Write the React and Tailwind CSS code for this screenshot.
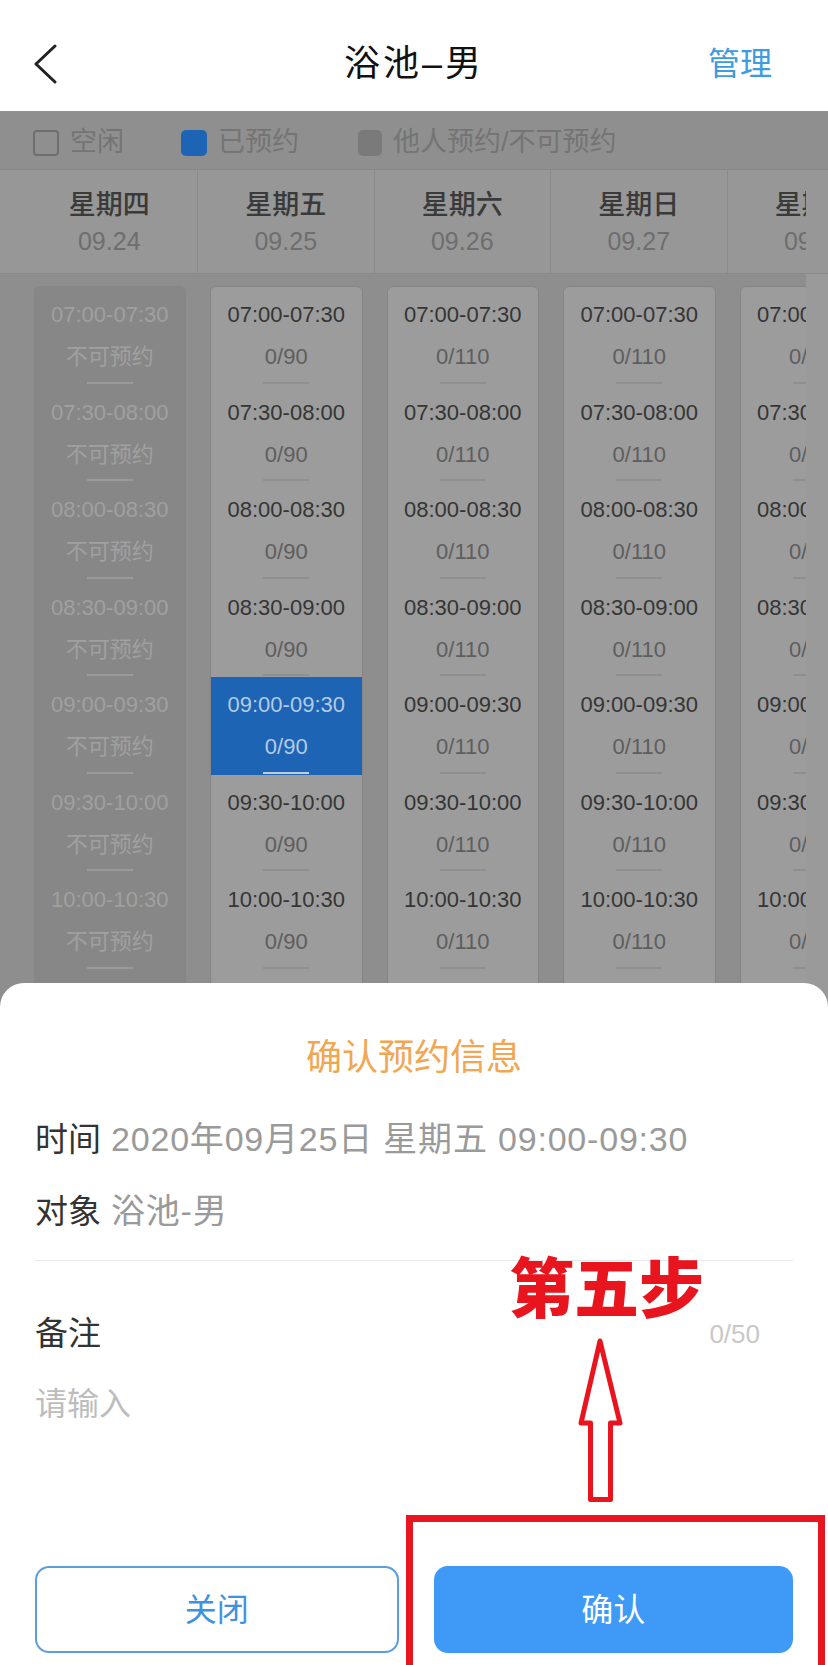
import React from 'react';

const font = { fontFamily: '"Liberation Sans", "Noto Sans CJK SC", sans-serif' };

const days = [
  { week: '星期四', date: '09.24', cap: null },
  { week: '星期五', date: '09.25', cap: '0/90' },
  { week: '星期六', date: '09.26', cap: '0/110' },
  { week: '星期日', date: '09.27', cap: '0/110' },
  { week: '星期一', date: '09.28', cap: '0/110' },
];

const times = [
  '07:00-07:30', '07:30-08:00', '08:00-08:30', '08:30-09:00',
  '09:00-09:30', '09:30-10:00', '10:00-10:30', '10:30-11:00',
];

function Slot({ time, cap, disabled, picked }) {
  let box = 'bg-transparent';
  let t1 = 'text-[#353535]';
  let t2 = 'text-[#5e5e5e]';
  let line = 'bg-[#8f8f8f]';
  if (disabled) { t1 = 'text-[#a0a0a0]'; t2 = 'text-[#a0a0a0]'; line = 'bg-[#9a9a9a]'; }
  if (picked) { box = 'bg-[#1d64b5]'; t1 = 'text-[#b4cbe4]'; t2 = 'text-[#b4cbe4]'; line = 'bg-[#c2ccd6]'; }
  return (
    <div className={`h-[97.5px] flex flex-col items-center pt-[14px] ${box}`}>
      <div className={`text-[22px] leading-[28px] ${t1}`}>{time}</div>
      <div className={`mt-[14px] text-[22px] leading-[28px] ${t2}`}>{disabled ? '不可预约' : cap}</div>
      <div className={`mt-auto mb-[1px] w-[46px] h-[2px] ${line}`} />
    </div>
  );
}

export default function App() {
  return (
    <div className="relative w-[828px] h-[1665px] overflow-hidden bg-[#8e8e8e]" style={font}>
      {/* nav */}
      <div className="h-[111px] bg-white grid grid-cols-[1fr_auto_1fr] items-center pl-[34px] pr-[56px] pt-[16px]">
        <svg width="24" height="40" viewBox="0 0 24 40">
          <polyline points="21,2 2,20 21,38" fill="none" stroke="#222" strokeWidth="3" strokeLinecap="round" strokeLinejoin="round" />
        </svg>
        <div className="text-[36px] leading-[44px] tracking-[3px] text-[#111] ml-[22px]">浴池–男</div>
        <div className="text-[32px] leading-[44px] text-[#3d9be0] justify-self-end">管理</div>
      </div>

      {/* legend */}
      <div className="h-[59px] bg-[#8f8f8f] border-b border-[#878787] flex items-center pl-[33px] pt-[5px] text-[27px] text-[#747474]">
        <span className="w-[26px] h-[26px] rounded-[4px] border-2 border-[#6e6e6e]" />
        <span className="ml-[11px]">空闲</span>
        <span className="ml-[57px] w-[26px] h-[26px] rounded-[5px] bg-[#1d64b5]" />
        <span className="ml-[11px]">已预约</span>
        <span className="ml-[59px] w-[24px] h-[26px] rounded-[5px] bg-[#7a7a7a]" />
        <span className="ml-[11px]">他人预约/不可预约</span>
      </div>

      {/* date row */}
      <div className="flex bg-[#979797] border-b border-[#8a8a8a]">
        <div className="w-[806px] h-[103px] flex overflow-hidden pl-[21.5px]">
          {days.map((d, i) => (
            <div key={i} className="w-[176.5px] shrink-0 flex flex-col items-center pt-[18px] border-r border-[#8a8a8a]">
              <div className="text-[27px] leading-[34px] font-medium text-[#3a3a3a]">{d.week}</div>
              <div className="mt-[4px] text-[25px] leading-[30px] text-[#6e6e6e]">{d.date}</div>
            </div>
          ))}
        </div>
        <div className="w-[22px]" />
      </div>

      {/* slots */}
      <div className="flex">
        <div className="w-[806px] overflow-hidden flex pl-[21.5px] pt-[12px]">
          {days.map((d, i) => (
            <div key={i} className="w-[176.5px] shrink-0 px-[12px]">
              <div className={`rounded-t-[6px] border border-[#858585] ${i === 0 ? 'bg-[#878787]' : 'bg-[#9c9c9c]'}`}>
                {times.map((t, j) => (
                  <Slot key={j} time={t} cap={d.cap} disabled={i === 0} picked={i === 1 && j === 4} />
                ))}
              </div>
            </div>
          ))}
        </div>
        <div className="w-[22px] bg-[#9a9a9a]" />
      </div>

      {/* confirm sheet */}
      <div className="absolute left-0 right-0 bottom-0 h-[682px] bg-white rounded-t-[24px] flex flex-col px-[35px] pb-[12px]">
        <div className="mt-[51px] h-[40px] leading-[40px] text-center text-[36px] text-[#f0a652]" style={{ fontFamily: '"Noto Sans CJK SC", sans-serif' }}>确认预约信息</div>
        <div className="mt-[45px] h-[40px] leading-[40px] whitespace-nowrap">
          <span className="text-[33px] text-[#333]">时间</span>
          <span className="ml-[10px] text-[34px] tracking-[0.8px] text-[#9a9a9a]">2020年09月25日 星期五 09:00-09:30</span>
        </div>
        <div className="mt-[32px] h-[40px] leading-[40px]">
          <span className="text-[33px] text-[#333]">对象</span>
          <span className="ml-[10px] text-[34px] tracking-[0.8px] text-[#9a9a9a]">浴池-男</span>
        </div>
        <div className="mt-[29px] h-px bg-[#e8e8e8]" />
        <div className="mt-[53px] h-[40px] flex items-center justify-between pr-[33px]">
          <span className="text-[33px] text-[#333]">备注</span>
          <span className="text-[26px] text-[#c8c8c8]">0/50</span>
        </div>
        <div className="mt-[30px] h-[40px] leading-[40px] text-[32px] text-[#bdbdbd]">请输入</div>
        <div className="mt-auto flex gap-[35px]">
          <button className="flex-1 h-[87px] rounded-[14px] border-2 border-[#5a9ee0] text-[32px] text-[#3f92e0]">关闭</button>
          <button className="flex-1 h-[87px] rounded-[14px] bg-[#3e9af6] text-[32px] text-white">确认</button>
        </div>
      </div>

      {/* red annotation */}
      <div className="absolute left-[509px] top-[1252px] text-[65px] leading-none font-black text-[#e8141e] whitespace-nowrap" style={{ fontFamily: '"Noto Sans CJK SC", sans-serif' }}>第五步</div>
      <svg className="absolute left-[570px] top-[1335px]" width="62" height="175" viewBox="0 0 62 175">
        <path d="M30 6 L50 88 L40.5 88 L40.5 164.5 L20.5 164.5 L20.5 88 L11 88 Z" fill="none" stroke="#e8141e" strokeWidth="5" strokeLinejoin="round" />
      </svg>
      <div className="absolute left-[406px] top-[1515px] w-[419px] h-[170px] border-[7px] border-[#e8141e]" />
    </div>
  );
}
